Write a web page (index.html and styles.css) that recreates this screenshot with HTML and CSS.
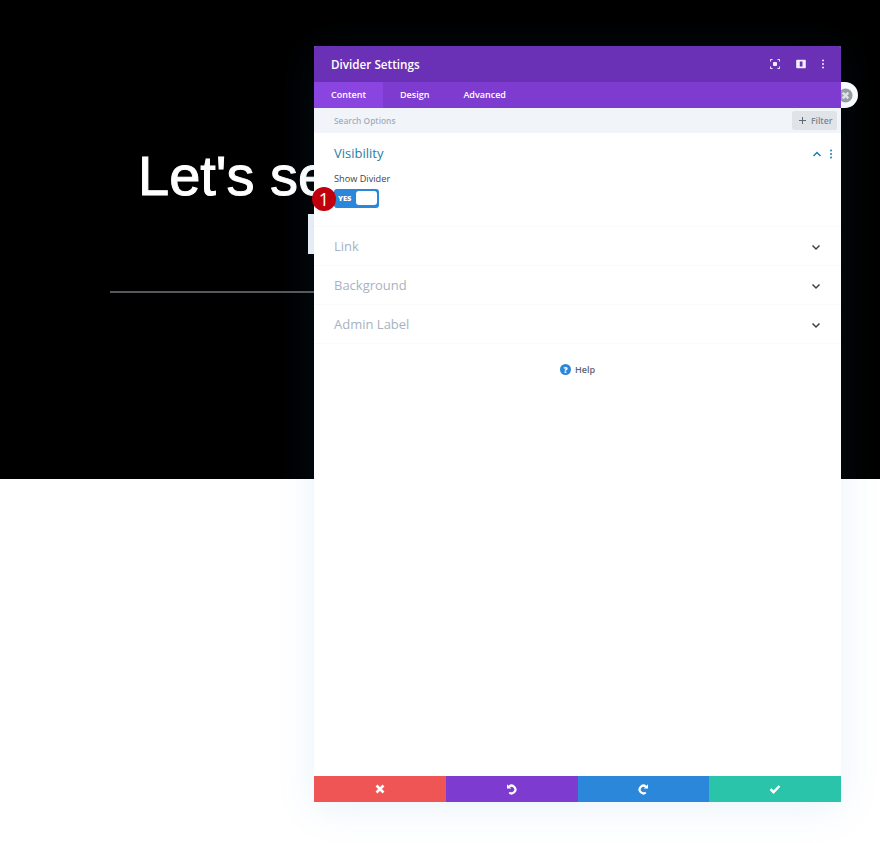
FILE: index.html
```html
<!DOCTYPE html>
<html lang="en">
<head>
<meta charset="utf-8">
<title>Divider Settings</title>
<link rel="stylesheet" href="styles.css">
</head>
<body>
<section class="hero">
  <h1 class="hero-title">Let's see</h1>
  <div class="hero-block"></div>
  <div class="hero-rule"></div>
</section>

<div class="badge-close">
  <svg viewBox="0 0 16 16" width="15" height="15"><circle cx="8" cy="8" r="7.500" fill="#9a9fa3"/><path d="M5 5l6 6M11 5l-6 6" stroke="#e4e6e8" stroke-width="2.600"/></svg>
</div>

<aside class="modal">
  <header class="modal-head">
    <h2 class="modal-title">Divider Settings</h2>
    <div class="head-icons">
      <svg viewBox="0 0 10 10" width="10" height="10" fill="none" stroke="#f3ecfb" stroke-width="1"><path d="M.5 2.500V.5H2.500M7.500 .5h2v2M9.500 7.500v2h-2M2.500 9.500h-2v-2"/><rect x="3" y="3" width="4" height="4" fill="#f3ecfb" stroke="none" rx="1"/></svg>
      <svg viewBox="0 0 10 10" width="10" height="10"><path fill="#f3ecfb" fill-rule="evenodd" d="M1 .8h8a.8.8 0 0 1 .8.8v6.800a.8.8 0 0 1-.8.8H1a.8.8 0 0 1-.8-.8V1.600A.8.8 0 0 1 1 .8zm2.800 1.700v5h2.700v-5z"/></svg>
      <svg class="head-dots" viewBox="0 0 6 12" width="6" height="12" fill="#f3ecfb"><circle cx="3" cy="2.500" r="1"/><circle cx="3" cy="6" r="1"/><circle cx="3" cy="9.500" r="1"/></svg>
    </div>
  </header>
  <nav class="tabs">
    <span class="tab tab-active">Content</span>
    <span class="tab">Design</span>
    <span class="tab">Advanced</span>
  </nav>
  <div class="search">
    <span class="search-label">Search Options</span>
    <span class="filter"><svg viewBox="0 0 7 7" width="7" height="7" fill="#5e6870"><path d="M3 0h1v3h3v1H4v3H3V4H0V3h3z"/></svg>Filter</span>
  </div>

  <div class="modal-body">
    <section class="group group-open">
      <div class="group-head">
        <span class="group-title group-title-on">Visibility</span>
        <span class="group-tools">
          <svg viewBox="0 0 12 12" width="12" height="12" fill="none" stroke="#1f7fa8" stroke-width="1.500"><path d="M2.500 8L6 4.500 9.500 8"/></svg>
          <svg viewBox="0 0 6 12" width="6" height="12" fill="#1f7fa8"><circle cx="3" cy="2.500" r="1"/><circle cx="3" cy="6" r="1"/><circle cx="3" cy="9.500" r="1"/></svg>
        </span>
      </div>
      <div class="field-label">Show Divider</div>
      <div class="toggle-row">
        <span class="step">1</span>
        <span class="toggle"><span class="toggle-yes">YES</span><span class="toggle-knob"></span></span>
      </div>
    </section>
    <section class="group">
      <span class="group-title">Link</span>
      <svg class="chev" viewBox="0 0 12 12" width="12" height="12" fill="none" stroke="#3b4148" stroke-width="1.500"><path d="M2.500 4.500L6 8l3.500-3.500"/></svg>
    </section>
    <section class="group">
      <span class="group-title">Background</span>
      <svg class="chev" viewBox="0 0 12 12" width="12" height="12" fill="none" stroke="#3b4148" stroke-width="1.500"><path d="M2.500 4.500L6 8l3.500-3.500"/></svg>
    </section>
    <section class="group">
      <span class="group-title">Admin Label</span>
      <svg class="chev" viewBox="0 0 12 12" width="12" height="12" fill="none" stroke="#3b4148" stroke-width="1.500"><path d="M2.500 4.500L6 8l3.500-3.500"/></svg>
    </section>
    <div class="help">
      <span class="help-icon">?</span>
      <span>Help</span>
    </div>
  </div>

  <footer class="actions">
    <span class="action action-red">
      <svg viewBox="0 0 12 12" width="12" height="12" fill="none" stroke="#fff" stroke-width="2.600"><path d="M2.500 2.500l7 7M9.500 2.500l-7 7"/></svg>
    </span>
    <span class="action action-purple">
      <svg viewBox="0 0 12 12" width="12" height="12" fill="none" stroke="#fff" stroke-width="2.200"><path d="M3.200 3.500A3.800 3.800 0 1 1 3.200 9.500"/><path d="M1 1.200v4.300h4.300z" fill="#fff" stroke="none"/></svg>
    </span>
    <span class="action action-blue">
      <svg viewBox="0 0 12 12" width="12" height="12" fill="none" stroke="#fff" stroke-width="2.200"><path d="M8.800 3.500A3.800 3.800 0 1 0 8.800 9.500"/><path d="M11 1.200v4.300H6.700z" fill="#fff" stroke="none"/></svg>
    </span>
    <span class="action action-green">
      <svg viewBox="0 0 12 12" width="12" height="12" fill="none" stroke="#fff" stroke-width="2.400"><path d="M1.500 6.200l3 3 6-6.200"/></svg>
    </span>
  </footer>
</aside>
</body>
</html>
```
FILE: styles.css
```css
* { box-sizing: border-box; }
html, body { margin: 0; padding: 0; }
body { width: 880px; height: 843px; background: #fff; overflow: hidden; font-family: "Open Sans", sans-serif; position: relative; }

.hero { height: 479px; background: #000; padding: 146px 0 0 138px; overflow: hidden; }
.hero-title { margin: 0; height: 68px; font: 400 56px/60px "Liberation Sans", Arial, sans-serif; color: #fff; white-space: nowrap; -webkit-text-stroke: 1px #fff; }
.hero-block { width: 10px; height: 40px; margin: 0 0 37px 170px; background: #eef1f7; }
.hero-rule { width: 210px; height: 2px; margin-left: -28px; background: #55595e; }

.badge-close { position: absolute; left: 825px; top: 82px; width: 33px; height: 26px; border-radius: 0 13px 13px 0; background: #fff; display: flex; align-items: center; justify-content: flex-end; padding-right: 5px; }

.modal { position: absolute; left: 314px; top: 46px; width: 527px; height: 756px; display: flex; flex-direction: column; background: #fff; border-radius: 2px; box-shadow: 0 6px 40px rgba(43,135,218,.1); }

.modal-head { height: 36px; flex: none; background: #6a30b5; display: flex; align-items: center; justify-content: space-between; padding: 0 15px 0 17px; border-radius: 2px 2px 0 0; }
.modal-title { margin: 0; font-size: 11.700px; line-height: 18px; font-weight: 600; color: #fff; }
.head-icons { display: flex; gap: 16px; align-items: center; }
.head-dots { margin-left: -1.500px; }

.tabs { height: 26px; flex: none; background: #7d3bcf; display: flex; align-items: center; }
.tab { height: 26px; padding: 0 17px; font-size: 9px; line-height: 26px; font-weight: 600; color: #fff; }
.tab-active { background: #8a45e0; width: 69px; }

.search { height: 25px; flex: none; background: #f1f5f9; display: flex; align-items: center; justify-content: space-between; padding: 0 4px 0 20px; }
.search-label { font-size: 8.400px; font-weight: 600; color: #a3aebc; }
.filter { height: 19px; width: 45px; background: #e0e4e9; border-radius: 2px; display: flex; align-items: center; gap: 5px; padding-left: 7px; font-size: 8.600px; font-weight: 600; color: #7a8590; }

.modal-body { flex: 1; display: flex; flex-direction: column; }
.group { height: 39px; flex: none; display: flex; align-items: center; justify-content: space-between; padding: 0 19px 0 20px; border-bottom: 1px solid #f9fafb; }
.group-open { height: 94px; display: block; padding: 0 7px 0 20px; }
.group-head { height: 40px; display: flex; align-items: center; justify-content: space-between; }
.group-tools { display: flex; align-items: center; gap: 5px; padding-top: 2px; }
.group-title { font-size: 13px; line-height: 18px; color: #a9b2bf; }
.group-title-on { color: #2a7ea5; }
.field-label { font-size: 9.200px; line-height: 14px; font-weight: 500; color: #3f4348; margin-top: -1px; }
.toggle-row { display: flex; align-items: center; height: 20px; margin-top: 2px; position: relative; }
.step { position: absolute; left: -22px; top: -1px; z-index: 1; width: 24px; height: 24px; border-radius: 50%; background: #c0000c; color: #fff; font-size: 18px; line-height: 24px; text-align: center; }
.toggle { width: 45px; height: 19px; background: #2b87da; border-radius: 3px; display: flex; align-items: center; justify-content: space-between; padding: 0 2px 0 4px; }
.toggle-yes { font-size: 7.500px; font-weight: 800; color: #fff; }
.toggle-knob { width: 21px; height: 14px; border-radius: 3px; background: #fff; }
.group .chev { margin-top: 2px; }

.help { display: flex; align-items: center; justify-content: center; gap: 4px; height: 50px; font-size: 9px; font-weight: 600; color: #5e6670; }
.help-icon { width: 11px; height: 11px; border-radius: 50%; background: #2b87da; color: #fff; font-size: 8px; line-height: 11px; font-weight: 800; text-align: center; }

.actions { height: 26px; flex: none; display: flex; }
.action { flex: 1; display: flex; align-items: center; justify-content: center; }
.action-red { background: #ef5555; }
.action-purple { background: #7d3bcf; }
.action-blue { background: #2b87da; }
.action-green { background: #29c4a9; }
```
